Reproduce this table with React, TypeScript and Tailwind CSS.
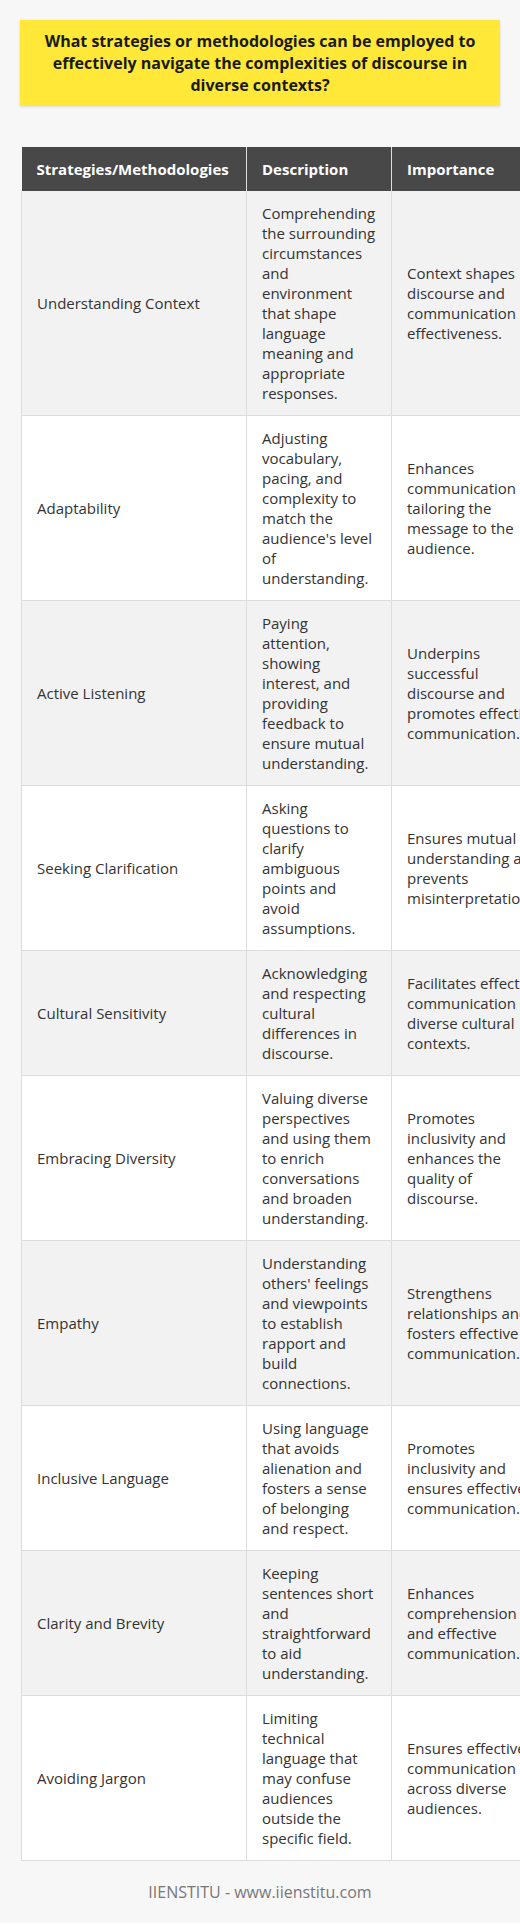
import React from "react";

interface Row {
  strategy: string;
  description: string;
  importance: string;
}

const rows: Row[] = [
  {
    strategy: "Understanding Context",
    description:
      "Comprehending the surrounding circumstances and environment that shape language meaning and appropriate responses.",
    importance: "Context shapes discourse and communication effectiveness.",
  },
  {
    strategy: "Adaptability",
    description:
      "Adjusting vocabulary, pacing, and complexity to match the audience's level of understanding.",
    importance: "Enhances communication by tailoring the message to the audience.",
  },
  {
    strategy: "Active Listening",
    description:
      "Paying attention, showing interest, and providing feedback to ensure mutual understanding.",
    importance: "Underpins successful discourse and promotes effective communication.",
  },
  {
    strategy: "Seeking Clarification",
    description: "Asking questions to clarify ambiguous points and\navoid assumptions.",
    importance: "Ensures mutual understanding and prevents misinterpretation.",
  },
  {
    strategy: "Cultural Sensitivity",
    description: "Acknowledging and respecting cultural differences in discourse.",
    importance: "Facilitates effective communication in diverse cultural contexts.",
  },
  {
    strategy: "Embracing Diversity",
    description:
      "Valuing diverse perspectives and using them to enrich conversations and broaden understanding.",
    importance: "Promotes inclusivity and enhances the quality of discourse.",
  },
  {
    strategy: "Empathy",
    description:
      "Understanding others' feelings and viewpoints to establish rapport and build connections.",
    importance: "Strengthens relationships and fosters effective communication.",
  },
  {
    strategy: "Inclusive Language",
    description:
      "Using language that avoids alienation and fosters a sense of belonging and respect.",
    importance: "Promotes inclusivity and ensures effective communication.",
  },
  {
    strategy: "Clarity and Brevity",
    description: "Keeping sentences short and straightforward to aid understanding.",
    importance: "Enhances comprehension and effective communication.",
  },
  {
    strategy: "Avoiding Jargon",
    description:
      "Limiting technical language that may confuse audiences outside the specific field.",
    importance: "Ensures effective communication across diverse audiences.",
  },
];

export default function App() {
  return (
    <div
      className="w-[520px] overflow-hidden bg-[#f7f7f7] text-[#333333]"
      style={{ fontFamily: '"Open Sans", "Noto Sans", sans-serif' }}
    >
      <div className="px-5 pt-5">
        <div className="bg-[#ffe838] px-4 py-[10px] text-center text-base font-bold leading-[22px] text-[#1a1a1a] shadow-[0_1px_3px_rgba(0,0,0,0.12)]">
          What strategies or methodologies can be employed to effectively navigate the complexities of discourse in diverse contexts?
        </div>
      </div>

      <div className="pt-[41px] pl-[21px]">
        <table className="w-[536px] table-fixed border-collapse">
          <colgroup>
            <col className="w-[225px]" />
            <col className="w-[145px]" />
            <col className="w-[166px]" />
          </colgroup>
          <thead>
            <tr className="bg-[#484848] text-white">
              <th className="h-[44px] border-r border-[#dddddd] pl-[15px] pr-[10px] text-left text-[15px] font-bold">
                Strategies/Methodologies
              </th>
              <th className="border-r border-[#dddddd] px-[15px] text-left text-[15px] font-bold">
                Description
              </th>
              <th className="px-[15px] text-left text-[15px] font-bold">Importance</th>
            </tr>
          </thead>
          <tbody>
            {rows.map((row, i) => (
              <tr
                key={row.strategy}
                className={
                  i % 2 === 0
                    ? "border-b border-[#dddddd] bg-[#f2f2f2]"
                    : "border-b border-[#dddddd] bg-white"
                }
              >
                <td className="border-l border-r border-[#dddddd] px-[15px] py-3 align-middle text-[15px] leading-5">
                  {row.strategy}
                </td>
                <td className="whitespace-pre-line border-r border-[#dddddd] pl-[15px] pr-[13px] py-3 align-middle text-[15px] leading-5">
                  {row.description}
                </td>
                <td className="px-[15px] py-3 align-middle text-[15px] leading-5">
                  {row.importance}
                </td>
              </tr>
            ))}
          </tbody>
        </table>
      </div>

      <div className="flex h-[62px] items-center justify-center text-base text-[#777777]">
        IIENSTITU - www.iienstitu.com
      </div>
    </div>
  );
}
